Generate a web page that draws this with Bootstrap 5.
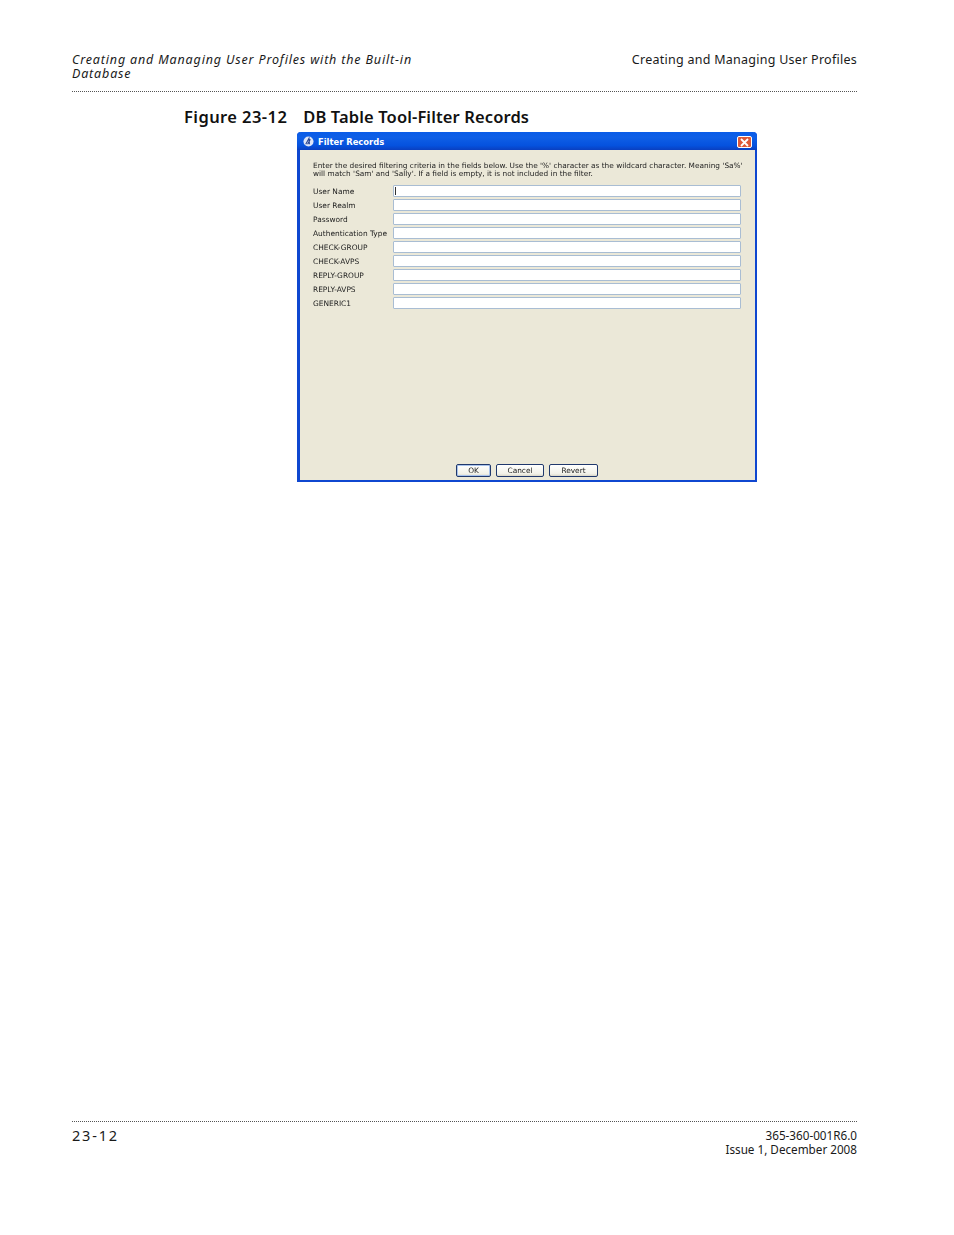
<!DOCTYPE html>
<html lang="en"><head><meta charset="utf-8"><title>DB Table Tool-Filter Records</title>
<link href="https://cdn.jsdelivr.net/npm/bootstrap@5.3.0/dist/css/bootstrap.min.css" rel="stylesheet">
<style>
html,body{margin:0;background:#fff}
body{font-family:"Noto Sans","Open Sans",sans-serif;color:#1a1a1a}
.sheet{width:954px;height:1235px;padding:53px 97px 79px 72px}
.runhead{font-size:12.5px;line-height:14px;height:39px;border-bottom:1px dotted #555;letter-spacing:.26px}
.runhead-l{width:350px;font-style:italic;letter-spacing:.84px}
.figtitle{font-size:16.5px;font-weight:600;line-height:20px;margin:15px 0 5px 112px;color:#111}
.figlabel{letter-spacing:.42px}
.figname{letter-spacing:.12px;margin-left:16px}
.xpwin{width:460px;height:350px;margin-left:225px;background:#ebe8d8;border:2px solid #0f47d0;border-top:0;border-radius:4px 4px 0 0;font-family:"DejaVu Sans",sans-serif;color:#222}
.xpbar{height:18px;margin:0 -2px;background:linear-gradient(#0a5ce8,#0f5fe6 30%,#0552de 75%,#0a3fc0);border-radius:4px 4px 0 0;padding:2px 5px 0 6px}
.xpbar-t{color:#fff;font-size:8.4px;font-weight:700;font-family:"DejaVu Sans",sans-serif}
.xplogo{width:11px;height:11px}
.xpclose{width:15px;height:12px;background:#df5a38;border:1px solid #fff;border-radius:2px}
.xpbody{height:330px;padding:12px 14px 3px 13px;border-left:1px solid #0f47d0;filter:blur(.25px)}
.xpnote{font-size:7.37px;line-height:8px;margin:0 0 7px 0;white-space:nowrap}
.xprow{height:12px;margin-bottom:2px;font-size:7.45px}
.xplabel{width:80px;white-space:nowrap;padding-top:1px}
.xpfield{width:348px;height:12px;background:#fff;border:1px solid #a9bdd3;border-radius:1px;position:relative}
.xpfield.on::before{content:"";display:block;width:1px;height:8px;background:#333;margin:1px 0 0 1px}
.xpbtns{gap:5px;margin-left:143px}
.xpbtn{height:13px;background:linear-gradient(#fff,#f2f1e8 80%,#d8d5c6);border:1px solid #20386c;border-radius:2px;font-size:7.4px;line-height:11px;text-align:center;color:#222}
.w-ok{width:35px;box-shadow:inset 0 0 0 1px #a9c3ec}
.w-cancel{width:48px}
.w-revert{width:49px}
.runfoot{border-top:1px dotted #555;padding-top:6px;font-size:11.7px;line-height:14px}
.pageno{font-size:14.5px;letter-spacing:1.8px;line-height:15px}
</style></head>
<body>
<div class="sheet d-flex flex-column">
  <header class="runhead d-flex justify-content-between">
    <div class="runhead-l">Creating and Managing User Profiles with the Built-in Database</div>
    <div>Creating and Managing User Profiles</div>
  </header>
  <div class="figtitle"><span class="figlabel">Figure 23-12</span><span class="figname">DB Table Tool-Filter Records</span></div>
  <div class="xpwin">
    <div class="xpbar d-flex align-items-center justify-content-between">
      <div class="d-flex align-items-center gap-1">
        <svg class="xplogo" viewBox="0 0 12 12"><circle cx="6" cy="6" r="5.5" fill="#dfe6f7"/><path d="M3 9 6.5 2.5 7 9M8 3.5 5 9" stroke="#23408f" stroke-width="1.2" fill="none"/></svg>
        <span class="xpbar-t">Filter Records</span>
      </div>
      <div class="xpclose d-flex align-items-center justify-content-center">
        <svg width="9" height="9" viewBox="0 0 9 9"><path d="M1 1 8 8M8 1 1 8" stroke="#fff" stroke-width="1.8"/></svg>
      </div>
    </div>
    <div class="xpbody d-flex flex-column">
      <p class="xpnote">Enter the desired filtering criteria in the fields below. Use the '%' character as the wildcard character. Meaning 'Sa%'<br>will match 'Sam' and 'Sally'. If a field is empty, it is not included in the filter.</p>
      <div class="xprow d-flex align-items-center"><div class="xplabel">User Name</div><div class="xpfield on"></div></div>
      <div class="xprow d-flex align-items-center"><div class="xplabel">User Realm</div><div class="xpfield"></div></div>
      <div class="xprow d-flex align-items-center"><div class="xplabel">Password</div><div class="xpfield"></div></div>
      <div class="xprow d-flex align-items-center"><div class="xplabel">Authentication Type</div><div class="xpfield"></div></div>
      <div class="xprow d-flex align-items-center"><div class="xplabel">CHECK-GROUP</div><div class="xpfield"></div></div>
      <div class="xprow d-flex align-items-center"><div class="xplabel">CHECK-AVPS</div><div class="xpfield"></div></div>
      <div class="xprow d-flex align-items-center"><div class="xplabel">REPLY-GROUP</div><div class="xpfield"></div></div>
      <div class="xprow d-flex align-items-center"><div class="xplabel">REPLY-AVPS</div><div class="xpfield"></div></div>
      <div class="xprow d-flex align-items-center"><div class="xplabel">GENERIC1</div><div class="xpfield"></div></div>
      <div class="xpbtns d-flex mt-auto">
        <div class="xpbtn w-ok">OK</div>
        <div class="xpbtn w-cancel">Cancel</div>
        <div class="xpbtn w-revert">Revert</div>
      </div>
    </div>
  </div>
  <footer class="runfoot d-flex justify-content-between mt-auto">
    <div class="pageno">23-12</div>
    <div class="text-end">365-360-001R6.0<br>Issue 1, December 2008</div>
  </footer>
</div>
<script src="https://cdn.jsdelivr.net/npm/bootstrap@5.3.0/dist/js/bootstrap.bundle.min.js"></script>
</body></html>
